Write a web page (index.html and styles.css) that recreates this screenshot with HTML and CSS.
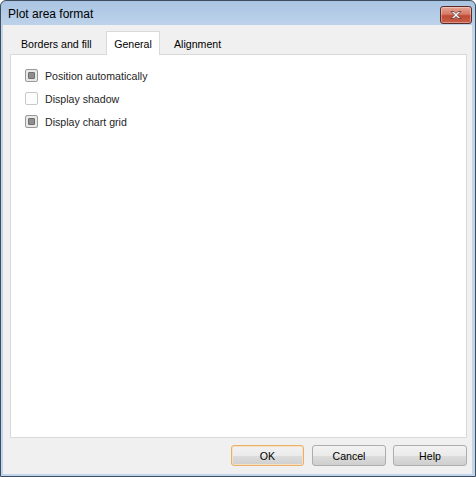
FILE: index.html
```html
<!DOCTYPE html>
<html>
<head>
<meta charset="utf-8">
<link rel="stylesheet" href="styles.css">
</head>
<body>
<div class="window">
  <div class="titlebar">
    <span class="title">Plot area format</span>
    <button class="close" aria-label="Close">
      <svg width="16" height="10" viewBox="0 0 16 10"><path d="M3 1.5 L6 1.5 L8 3.5 L10 1.5 L13 1.5 L9.5 5 L13 8.5 L10 8.5 L8 6.5 L6 8.5 L3 8.5 L6.5 5 Z" fill="#f4f4f4" stroke="#5a3a3a" stroke-width="0.8" stroke-linejoin="round"/></svg>
    </button>
  </div>
  <div class="client">
    <div class="tabs">
      <div class="tab first">Borders and fill</div>
      <div class="tab active">General</div>
      <div class="tab last">Alignment</div>
    </div>
    <div class="panel">
      <label class="check"><span class="box filled"></span>Position automatically</label>
      <label class="check"><span class="box"></span>Display shadow</label>
      <label class="check"><span class="box filled"></span>Display chart grid</label>
    </div>
    <div class="buttons">
      <button class="btn default">OK</button>
      <button class="btn">Cancel</button>
      <button class="btn">Help</button>
    </div>
  </div>
</div>
</body>
</html>
```
FILE: styles.css
```css
html, body {
  margin: 0;
  padding: 0;
  background: #ffffff;
}
body {
  font-family: "Liberation Sans", Arial, sans-serif;
  font-size: 10.6px;
  color: #000;
}
.window {
  width: 476px;
  height: 477px;
  box-sizing: border-box;
  border: 1px solid #3e4c5c;
  border-radius: 6px 6px 0 0;
  background: linear-gradient(#a9c4e2, #c2d6ec 30px, #c0d6ee);
  display: flex;
  flex-direction: column;
  padding: 0 3px 2px 2px;
  overflow: hidden;
}
.titlebar {
  height: 24px;
  display: flex;
  align-items: center;
  justify-content: space-between;
  padding-left: 5px;
  flex: none;
}
.title {
  font-size: 12px;
  color: #000;
  margin-top: 1px;
}
.close {
  width: 32px;
  height: 18px;
  margin-top: 3px;
  border: 1px solid #5a2a2a;
  border-radius: 3px;
  background: linear-gradient(#e5a496, #d67a66 45%, #c04a33 55%, #c8604a);
  padding: 0;
  display: flex;
  align-items: center;
  justify-content: center;
  box-shadow: inset 0 0 0 1px rgba(255,255,255,0.35);
}
.client {
  flex: 1;
  background: #f0f0f0;
  display: flex;
  flex-direction: column;
  padding: 6px 5px 0 7px;
}
.tabs {
  display: flex;
  height: 23px;
  align-items: flex-end;
  flex: none;
}
.tab {
  height: 21px;
  line-height: 22px;
  box-sizing: border-box;
  color: #000;
}
.tab.first {
  width: 96px;
  padding-left: 11px;
}
.tab.active {
  width: 54px;
  height: 24px;
  line-height: 24px;
  text-align: center;
  background: #fff;
  border: 1px solid #d9d9d9;
  border-bottom: none;
  margin-bottom: -1px;
  position: relative;
}
.tab.last {
  padding-left: 14px;
}
.panel {
  height: 384px;
  background: #fff;
  border: 1px solid #d9d9d9;
  box-sizing: border-box;
  padding: 14px 14px;
  display: flex;
  flex-direction: column;
  gap: 10px;
  flex: none;
}
.check {
  display: flex;
  align-items: center;
  gap: 7px;
  height: 13px;
  color: #1e1e1e;
}
.box {
  width: 13px;
  height: 13px;
  box-sizing: border-box;
  border: 1px solid #c8c8c8;
  border-radius: 2px;
  background: #fdfdfd;
  position: relative;
}
.box.filled {
  border-color: #9a9a9a;
  background: #e8e8e8;
}
.box.filled::after {
  content: "";
  position: absolute;
  left: 2px;
  top: 2px;
  width: 7px;
  height: 7px;
  box-sizing: border-box;
  border: 1px solid #6e6e6e;
  border-radius: 1px;
  background: #8e8e8e;
}
.buttons {
  display: flex;
  justify-content: flex-end;
  gap: 7px;
  padding-top: 7px;
}
.btn {
  width: 74px;
  height: 21px;
  font-family: "Liberation Sans", Arial, sans-serif;
  font-size: 10.6px;
  color: #000;
  border: 1px solid #adadad;
  border-radius: 3px;
  background: linear-gradient(#f2f2f2, #ebebeb 50%, #dddddd 51%, #cfcfcf);
  padding: 0;
}
.btn.default {
  width: 73px;
  border-color: #e8b068;
  box-shadow: inset 0 0 0 1px #f8e0c0;
  margin-right: 1px;
}
```
